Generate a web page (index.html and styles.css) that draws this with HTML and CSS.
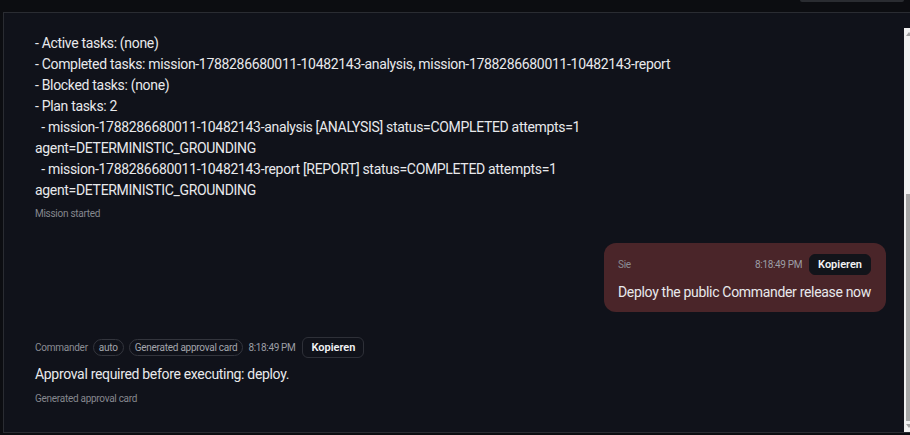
FILE: index.html
```html
<!DOCTYPE html>
<html lang="de">
<head>
<meta charset="utf-8">
<title>Commander</title>
<link rel="stylesheet" href="styles.css">
</head>
<body>
<div class="topbar"><div class="top-btn"></div></div>
<div class="panel">
  <div class="feed">
    <div class="msg msg-system">
      <div class="msg-text pre">- Active tasks: (none)
- Completed tasks: mission-1788286680011-10482143-analysis, mission-1788286680011-10482143-report
- Blocked tasks: (none)
- Plan tasks: 2
  - mission-1788286680011-10482143-analysis [ANALYSIS] status=COMPLETED attempts=1 agent=DETERMINISTIC_GROUNDING
  - mission-1788286680011-10482143-report [REPORT] status=COMPLETED attempts=1 agent=DETERMINISTIC_GROUNDING</div>
      <div class="meta-note">Mission started</div>
    </div>

    <div class="msg msg-user">
      <div class="bubble">
        <div class="bubble-head">
          <span class="who">Sie</span>
          <span class="spacer"></span>
          <span class="time">8:18:49 PM</span>
          <button class="copy copy-filled">Kopieren</button>
        </div>
        <div class="msg-text">Deploy the public Commander release now</div>
      </div>
    </div>

    <div class="msg msg-agent">
      <div class="agent-head">
        <span class="who">Commander</span>
        <span class="chip">auto</span>
        <span class="chip">Generated approval card</span>
        <span class="time">8:18:49 PM</span>
        <button class="copy copy-outline">Kopieren</button>
      </div>
      <div class="msg-text">Approval required before executing: deploy.</div>
      <div class="meta-note">Generated approval card</div>
    </div>
  </div>
  <div class="scrollbar">
    <div class="track">
      <div class="arrow arrow-up"></div>
      <div class="thumb"></div>
      <div class="arrow arrow-down"></div>
    </div>
  </div>
</div>
</body>
</html>
```

FILE: styles.css
```css
* { box-sizing: border-box; }
html, body { margin: 0; padding: 0; }
body {
  background: #0c0d11;
  font-family: Roboto, "Noto Sans", sans-serif;
  color: #e6e7ea;
  width: 910px;
  height: 435px;
  overflow: hidden;
}
.topbar {
  height: 12px;
  display: flex;
  justify-content: flex-end;
  padding-right: 6px;
}
.top-btn {
  width: 104px;
  height: 2px;
  background: #2a2c31;
  border-radius: 0 0 4px 4px;
}
.panel {
  margin-left: 3px;
  height: 421px;
  border-top: 1px solid #2a2c32;
  border-left: 1px solid #2a2c32;
  border-bottom: 1px solid #2a2c32;
  background: #10121a;
  display: flex;
}
.feed {
  flex: 1;
  padding: 20px 18px 0 31px;
  display: flex;
  flex-direction: column;
  overflow: hidden;
}
.msg-text {
  font-size: 14px;
  line-height: 21px;
  letter-spacing: -0.32px;
  color: #e8e9ec;
}
.pre {
  white-space: pre-wrap;
  max-width: 700px;
}
.meta-note {
  font-size: 10px;
  line-height: 14px;
  letter-spacing: -0.28px;
  color: #85878e;
  margin-top: 6px;
}
.msg-user {
  display: flex;
  justify-content: flex-end;
  margin-top: 22px;
}
.bubble {
  background: #4a2529;
  border-radius: 12px;
  padding: 11px 15px 9px 14px;
  display: flex;
  flex-direction: column;
  gap: 7px;
}
.bubble-head {
  display: flex;
  align-items: center;
  gap: 7px;
  height: 21px;
}
.spacer { flex: 1; }
.who {
  font-size: 10px;
  letter-spacing: -0.25px;
  color: #8b8d94;
}
.time {
  font-size: 10px;
  letter-spacing: -0.35px;
  color: #9c9ea5;
}
.copy {
  font-family: inherit;
  font-size: 11px;
  font-weight: 600;
  color: #f2f2f4;
  height: 21px;
  padding: 0 8px;
  border-radius: 6px;
  cursor: pointer;
  line-height: 1;
}
.copy-filled {
  background: #12141a;
  border: 1px solid #12141a;
}
.copy-outline {
  background: #10121a;
  border: 1px solid #2e3038;
}
.msg-agent {
  margin-top: 25px;
}
.agent-head {
  display: flex;
  align-items: center;
  gap: 5px;
  height: 21px;
  margin-bottom: 6px;
}
.agent-head .copy { margin-left: 2px; }
.chip {
  font-size: 10px;
  line-height: 15px;
  letter-spacing: -0.25px;
  color: #a3a5ac;
  border: 1px solid #33353d;
  border-radius: 9px;
  padding: 0 5px;
}
.msg-agent .meta-note { margin-top: 7px; }
.scrollbar {
  width: 6px;
  padding-top: 15px;
  overflow: hidden;
}
.track {
  width: 17px;
  height: 404px;
  background: #f1f1f1;
  display: flex;
  flex-direction: column;
}
.arrow {
  height: 15px;
  display: flex;
  justify-content: center;
  align-items: center;
}
.arrow-up::before {
  content: "";
  margin-left: -8px;
  border-left: 3px solid transparent;
  border-right: 3px solid transparent;
  border-bottom: 4px solid #a3a3a3;
}
.arrow-down::before {
  content: "";
  margin-left: -8px;
  border-left: 3px solid transparent;
  border-right: 3px solid transparent;
  border-top: 4px solid #a3a3a3;
}
.thumb {
  margin-top: 154px;
  margin-left: 2px;
  width: 13px;
  height: 227px;
  background: #a8a8a8;
  flex: none;
}
.arrow-down { margin-top: auto; }
```
